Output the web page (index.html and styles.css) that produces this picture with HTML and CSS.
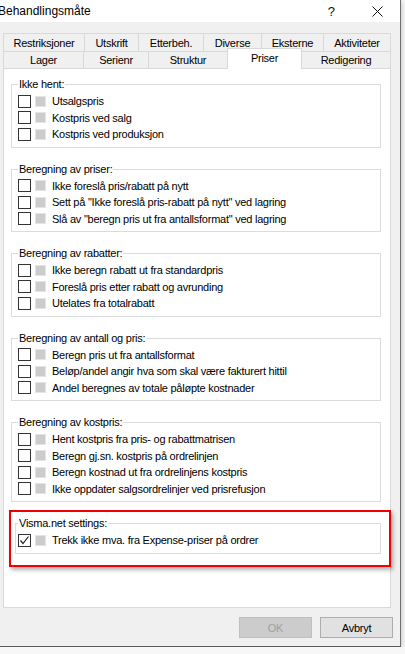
FILE: index.html
```html
<!DOCTYPE html>
<html>
<head>
<meta charset="utf-8">
<link rel="stylesheet" href="styles.css">
</head>
<body>
<div class="window">
  <div class="titlebar">
    <span class="title">Behandlingsmåte</span>
    <span class="help">?</span>
    <svg class="close" width="11" height="11" viewBox="0 0 11 11"><path d="M0.5 0.5L10.5 10.5M10.5 0.5L0.5 10.5" stroke="#111" stroke-width="1" fill="none"/></svg>
  </div>
  <div class="tabs">
    <div class="tabrow">
      <div class="tab t1">Restriksjoner</div>
      <div class="tab t2">Utskrift</div>
      <div class="tab t3">Etterbeh.</div>
      <div class="tab t4">Diverse</div>
      <div class="tab t5">Eksterne</div>
      <div class="tab t6">Aktiviteter</div>
    </div>
    <div class="tabrow tabrow2">
      <div class="tab u1">Lager</div>
      <div class="tab u2">Serienr</div>
      <div class="tab u3">Struktur</div>
      <div class="tab u4 active">Priser</div>
      <div class="tab u5">Redigering</div>
    </div>
  </div>
  <div class="panel">
    <fieldset class="group first">
      <legend>Ikke hent:</legend>
      <div class="row"><span class="cb"></span><span class="ind"></span><span class="lbl">Utsalgspris</span></div>
      <div class="row"><span class="cb"></span><span class="ind"></span><span class="lbl">Kostpris ved salg</span></div>
      <div class="row"><span class="cb"></span><span class="ind"></span><span class="lbl">Kostpris ved produksjon</span></div>
    </fieldset>
    <fieldset class="group">
      <legend>Beregning av priser:</legend>
      <div class="row"><span class="cb"></span><span class="ind"></span><span class="lbl">Ikke foreslå pris/rabatt på nytt</span></div>
      <div class="row"><span class="cb"></span><span class="ind"></span><span class="lbl">Sett på "Ikke foreslå pris-rabatt på nytt" ved lagring</span></div>
      <div class="row"><span class="cb"></span><span class="ind"></span><span class="lbl">Slå av "beregn pris ut fra antallsformat" ved lagring</span></div>
    </fieldset>
    <fieldset class="group">
      <legend>Beregning av rabatter:</legend>
      <div class="row"><span class="cb"></span><span class="ind"></span><span class="lbl">Ikke beregn rabatt ut fra standardpris</span></div>
      <div class="row"><span class="cb"></span><span class="ind"></span><span class="lbl">Foreslå pris etter rabatt og avrunding</span></div>
      <div class="row"><span class="cb"></span><span class="ind"></span><span class="lbl">Utelates fra totalrabatt</span></div>
    </fieldset>
    <fieldset class="group">
      <legend>Beregning av antall og pris:</legend>
      <div class="row"><span class="cb"></span><span class="ind"></span><span class="lbl">Beregn pris ut fra antallsformat</span></div>
      <div class="row"><span class="cb"></span><span class="ind"></span><span class="lbl">Beløp/andel angir hva som skal være fakturert hittil</span></div>
      <div class="row"><span class="cb"></span><span class="ind"></span><span class="lbl">Andel beregnes av totale påløpte kostnader</span></div>
    </fieldset>
    <fieldset class="group">
      <legend>Beregning av kostpris:</legend>
      <div class="row"><span class="cb"></span><span class="ind"></span><span class="lbl">Hent kostpris fra pris- og rabattmatrisen</span></div>
      <div class="row"><span class="cb"></span><span class="ind"></span><span class="lbl">Beregn gj.sn. kostpris på ordrelinjen</span></div>
      <div class="row"><span class="cb"></span><span class="ind"></span><span class="lbl">Beregn kostnad ut fra ordrelinjens kostpris</span></div>
      <div class="row"><span class="cb"></span><span class="ind"></span><span class="lbl">Ikke oppdater salgsordrelinjer ved prisrefusjon</span></div>
    </fieldset>
    <div class="highlight">
      <fieldset class="group visma">
        <legend>Visma.net settings:</legend>
        <div class="row"><span class="cb checked"><svg width="11" height="11" viewBox="0 0 11 11"><path d="M1.5 5.5L4 8.5L9.5 1.5" stroke="#222" stroke-width="1.2" fill="none"/></svg></span><span class="ind"></span><span class="lbl">Trekk ikke mva. fra Expense-priser på ordrer</span></div>
      </fieldset>
    </div>
  </div>
  <div class="buttons">
    <div class="btn disabled">OK</div>
    <div class="btn">Avbryt</div>
  </div>
</div>
</body>
</html>
```
FILE: styles.css
```css
html, body {
  margin: 0;
  padding: 0;
}
body {
  background: #f7f7f7;
  font-family: "Liberation Sans", Arial, sans-serif;
  font-size: 11px;
  letter-spacing: -0.25px;
  color: #000;
  overflow: hidden;
}
.window {
  width: 400px;
  height: 646px;
  background: #f0f0f0;
  border-right: 1px solid #707070;
  border-bottom: 1px solid #5a5a5a;
  box-shadow: 0 2px 6px rgba(0, 0, 0, 0.25);
  display: flex;
  flex-direction: column;
}
.titlebar {
  height: 22px;
  background: #fff;
  display: flex;
  align-items: center;
  flex-shrink: 0;
}
.title {
  font-size: 12px;
  letter-spacing: 0;
  margin-left: -2px;
  flex: 1;
  color: #000;
}
.help {
  font-size: 13px;
  letter-spacing: 0;
  margin-right: 37px;
  color: #111;
}
.close {
  margin-right: 17px;
  display: block;
}
.tabs {
  margin: 11px 0 0 3px;
  width: 388px;
  flex-shrink: 0;
}
.tabrow {
  display: flex;
  height: 18px;
  align-items: flex-start;
}
.tabrow2 {
  height: 17px;
}
.tab {
  box-sizing: border-box;
  height: 100%;
  border-top: 1px solid #d9d9d9;
  border-left: 1px solid #d9d9d9;
  display: flex;
  align-items: center;
  justify-content: center;
  white-space: nowrap;
}
.tab:last-child {
  border-right: 1px solid #d9d9d9;
}
.t1 { width: 81px; }
.t2 { width: 54px; }
.t3 { width: 65px; }
.t4 { width: 58px; }
.t5 { width: 62px; }
.t6 { width: 68px; }
.u1 { width: 80px; }
.u2 { width: 65px; }
.u3 { width: 79px; }
.u4 { width: 75px; }
.u5 { width: 89px; }
.tab.active {
  height: 21px;
  margin-top: -3px;
  background: #fff;
  border-right: 1px solid #d9d9d9;
  padding-bottom: 2px;
  position: relative;
  z-index: 1;
}
.tab.active + .tab {
  border-left: none;
}
.panel {
  box-sizing: border-box;
  width: 388px;
  height: 540px;
  margin-left: 3px;
  background: #fff;
  border: 1px solid #d9d9d9;
  padding-top: 9px;
  flex-shrink: 0;
}
.group {
  margin: 15px 9px 0 7px;
  padding: 2px 0 4px 6px;
  border: 1px solid #dcdcdc;
  min-width: 0;
}
.group.first {
  margin-top: 0;
}
legend {
  padding: 0 1px;
  line-height: 13px;
  height: 13px;
}
.row {
  display: flex;
  align-items: center;
  height: 16.5px;
  white-space: nowrap;
}
.cb {
  box-sizing: border-box;
  width: 13px;
  height: 13px;
  border: 1px solid #333;
  background: #fff;
  flex-shrink: 0;
  display: flex;
  align-items: center;
  justify-content: center;
}
.cb svg {
  display: block;
}
.ind {
  box-sizing: border-box;
  width: 11px;
  height: 11px;
  margin-left: 4px;
  border: 1px solid #e4e4e4;
  background: #cccccc;
  flex-shrink: 0;
}
.lbl {
  margin-left: 6px;
}
.highlight {
  margin: 8px -1px 0 5px;
  border: 2px solid #f00000;
  padding: 5px 8px 11px 4px;
  box-shadow: 2px 3px 4px rgba(0, 0, 0, 0.3);
  background: #fff;
}
.group.visma {
  margin: 0;
  padding-left: 2px;
}
.buttons {
  display: flex;
  justify-content: flex-end;
  gap: 8px;
  margin-top: 9px;
  padding-right: 7px;
}
.btn {
  box-sizing: border-box;
  width: 73px;
  height: 21px;
  border: 1px solid #adadad;
  background: #e1e1e1;
  display: flex;
  align-items: center;
  justify-content: center;
}
.btn.disabled {
  background: #cccccc;
  border-color: #bfbfbf;
  color: #a0a0a0;
}
```
